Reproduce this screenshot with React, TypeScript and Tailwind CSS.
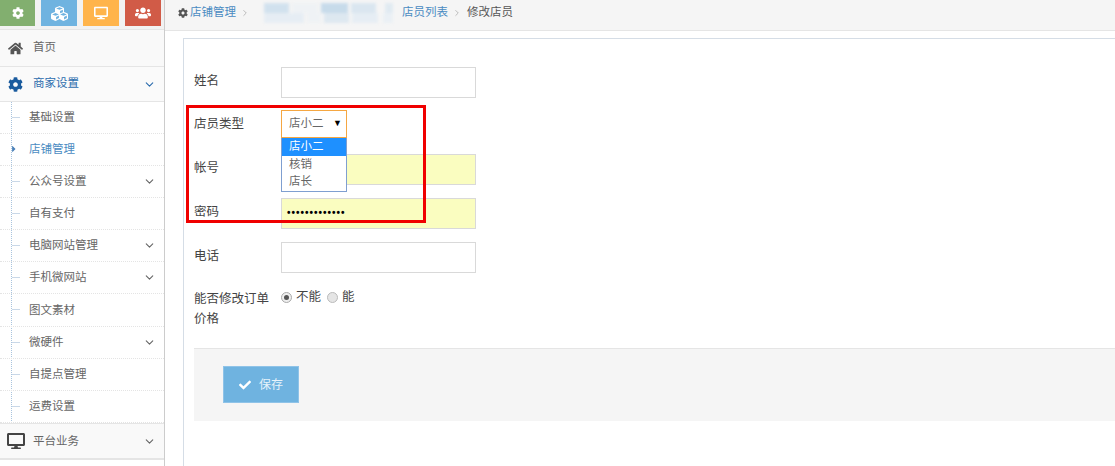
import React from "react";
import { FaCog, FaCubes, FaDesktop, FaUsers, FaHome, FaCheck, FaCaretRight } from "react-icons/fa";
import { ChevronDown, ChevronRight } from "lucide-react";

const font = { fontFamily: '"Liberation Sans","Noto Sans CJK SC",sans-serif' };

function SubItem({ label, active, arrow, tall }: { label: string; active?: boolean; arrow?: boolean; tall?: boolean }) {
  return (
    <div className={`relative flex items-center border-b border-dotted border-[#e4e4e4] pl-[29px] pr-[8px] ${tall ? "h-[33px]" : "h-8"}`}>
      {active ? (
        <FaCaretRight className="absolute left-[9px] top-[10px] text-[10px] text-[#4a80b8]" />
      ) : (
        <span className="absolute left-[12px] top-[15px] h-px w-[8px] bg-[#c9d8e8]" />
      )}
      <span className={`flex-1 pt-[1px] text-[11.5px] ${active ? "text-[#4a8bc2]" : "text-[#666]"}`}>{label}</span>
      {arrow && <ChevronDown size={13} strokeWidth={2} className="text-[#666]" />}
    </div>
  );
}

function Field({ label, yellow, children }: { label: string; yellow?: boolean; children?: React.ReactNode }) {
  return (
    <div className="flex h-[31px] items-center">
      <label className="w-[87px] pb-[2px] text-[12.5px] text-[#444]">{label}</label>
      <div className={`flex h-[31px] w-[195px] items-center border border-[#d9d9d9] px-[5px] ${yellow ? "bg-[#fafdc0]" : "bg-white"}`}>
        {children}
      </div>
    </div>
  );
}

export default function App() {
  return (
    <div className="flex h-[466px] w-[1115px] overflow-hidden bg-white" style={font}>
      <aside className="flex w-[165px] shrink-0 flex-col border-r border-[#cccccc] bg-white">
        <div className="flex h-[30px] shrink-0 gap-[6px] border-b border-[#e5e5e5] bg-[#f2f2f2]">
          <div className="flex h-[26px] w-[35px] items-center justify-center bg-[#82af6f] text-[12px] text-white"><FaCog /></div>
          <div className="flex h-[26px] w-[36px] items-center justify-center bg-[#6fb3e0] text-[17px] text-white"><FaCubes /></div>
          <div className="flex h-[26px] w-[36px] items-center justify-center bg-[#ffb44b] text-[14px] text-white"><FaDesktop /></div>
          <div className="flex h-[26px] w-[36px] items-center justify-center bg-[#d15b47] text-[16px] text-white"><FaUsers /></div>
        </div>
        <div className="flex h-[37px] shrink-0 items-center border-b border-[#e5e5e5] bg-[#f9f9f9] pl-[8px]">
          <FaHome className="w-[15px] text-[15px] text-[#555]" />
          <span className="ml-[10px] text-[11.5px] text-[#666]">首页</span>
        </div>
        <div className="flex h-[35px] shrink-0 items-center border-b border-[#e5e5e5] bg-[#fafafa] pl-[8px] pr-[8px]">
          <FaCog className="w-[15px] text-[15px] text-[#1a5b9e]" />
          <span className="ml-[10px] flex-1 text-[11.5px] text-[#2b6cad]">商家设置</span>
          <ChevronDown size={13} strokeWidth={2} className="text-[#2b6cad]" />
        </div>
        <div className="relative shrink-0 border-b border-[#e5e5e5]">
          <span className="absolute bottom-0 left-[11px] top-0 border-l border-dotted border-[#a9c4de]" />
          <SubItem label="基础设置" />
          <SubItem label="店铺管理" active />
          <SubItem label="公众号设置" arrow />
          <SubItem label="自有支付" />
          <SubItem label="电脑网站管理" arrow />
          <SubItem label="手机微网站" arrow />
          <SubItem label="图文素材" tall />
          <SubItem label="微硬件" arrow />
          <SubItem label="自提点管理" />
          <SubItem label="运费设置" />
        </div>
        <div className="flex h-[36px] shrink-0 items-center border-b-2 border-[#e5e5e5] bg-[#f9f9f9] pl-[7px] pr-[8px]">
          <FaDesktop className="w-[18px] text-[18px] text-[#444]" />
          <span className="ml-[8px] flex-1 pt-[1px] text-[11.5px] text-[#666]">平台业务</span>
          <ChevronDown size={13} strokeWidth={2} className="text-[#666]" />
        </div>
      </aside>

      <main className="relative flex min-w-0 flex-1 flex-col">
        <div className="flex h-[31px] shrink-0 items-center border-b border-[#e5e5e5] bg-[#f5f5f5] pb-[5px] pl-[13px] text-[11.5px]">
          <FaCog className="mr-[2px] text-[10px] text-[#555]" />
          <span className="text-[#4a8bc2]">店铺管理</span>
          <ChevronRight size={10} strokeWidth={1.5} className="ml-[4px] text-[#999]" />
          <div className="ml-[14px] flex h-[20px] w-[129px] flex-col gap-0 opacity-80 blur-[1.5px]">
            <div className="flex h-[10px] gap-[3px]">
              <span className="h-full w-[26px] bg-[#c9dded]" />
              <span className="h-full w-[26px] bg-[#eef2f5]" />
              <span className="h-full w-[28px] bg-[#bcd5e8]" />
              <span className="h-full w-[26px] bg-[#d4e3ef]" />
              <span className="ml-[6px] h-full w-[8px] bg-[#dce8f1]" />
            </div>
            <div className="flex h-[10px] gap-[3px]">
              <span className="h-full w-[40px] bg-[#e3ecf4]" />
              <span className="h-full w-[14px] bg-[#eef2f5]" />
              <span className="h-full w-[26px] bg-[#d8e5f0]" />
              <span className="h-full w-[26px] bg-[#e3ecf4]" />
              <span className="ml-[2px] h-full w-[10px] bg-[#e8eff5]" />
            </div>
          </div>
          <span className="ml-[9px] text-[#4a8bc2]">店员列表</span>
          <ChevronRight size={10} strokeWidth={1.5} className="ml-[4px] text-[#999]" />
          <span className="ml-[5px] text-[#555]">修改店员</span>
        </div>
        <div className="ml-[18px] mt-[7px] flex-1 border-l border-t border-[#d5dde6] pl-[10px]">
          <div className="h-[28px]" />
          <Field label="姓名" />
          <div className="relative mt-[12px] flex h-[28px] items-center">
            <label className="w-[87px] text-[12.5px] text-[#444]">店员类型</label>
            <div className="flex h-[28px] w-[66px] items-center justify-between border border-[#f5a742] pl-[7px] pr-[4px] text-[11.5px] text-[#666]">
              <span>店小二</span>
              <span className="text-[9px] text-black">▼</span>
            </div>
            <div className="absolute left-[87px] top-[28px] z-10 w-[66px] border border-t-0 border-[#7f9fd0] bg-white text-[11.5px] leading-[17.5px] text-[#666]">
              <div className="bg-[#1e90ff] pl-[7px] text-white">店小二</div>
              <div className="pl-[7px]">核销</div>
              <div className="pl-[7px]">店长</div>
            </div>
          </div>
          <div className="mt-[16px]">
            <Field label="帐号" yellow />
          </div>
          <div className="mt-[13px]">
            <Field label="密码" yellow>
              <span className="pb-[3px] text-[10px] font-bold tracking-[1px] text-black">•••••••••••••</span>
            </Field>
          </div>
          <div className="mt-[13px]">
            <Field label="电话" />
          </div>
          <div className="mt-[13px] flex h-[62px] items-start">
            <label className="w-[87px] pt-[3px] text-[12.5px] leading-[20px] text-[#444]">能否修改订单价格</label>
            <div className="flex items-center pt-[2px] text-[12.5px] text-[#444]">
              <span className="flex h-[11px] w-[11px] items-center justify-center rounded-full border border-[#aaa] bg-[#eee]">
                <span className="h-[5px] w-[5px] rounded-full bg-[#555]" />
              </span>
              <span className="ml-[4px]">不能</span>
              <span className="ml-[6px] h-[11px] w-[11px] rounded-full border border-[#bbb] bg-[#e5e5e5]" />
              <span className="ml-[4px]">能</span>
            </div>
          </div>
          <div className="h-[73px] border-t border-[#e5e5e5] bg-[#f5f5f5] pl-[29px] pt-[17px]">
            <button className="flex h-[37px] w-[76px] items-center justify-center gap-[8px] border border-[#8fc3e8] bg-[#6fb3e0] text-xs text-[#e6f2fa]">
              <FaCheck className="text-[12px] text-white" />
              保存
            </button>
          </div>
        </div>
        <div className="pointer-events-none absolute left-[21px] top-[105px] z-20 h-[118px] w-[240px] border-[3px] border-[#f00000]" />
      </main>
    </div>
  );
}
